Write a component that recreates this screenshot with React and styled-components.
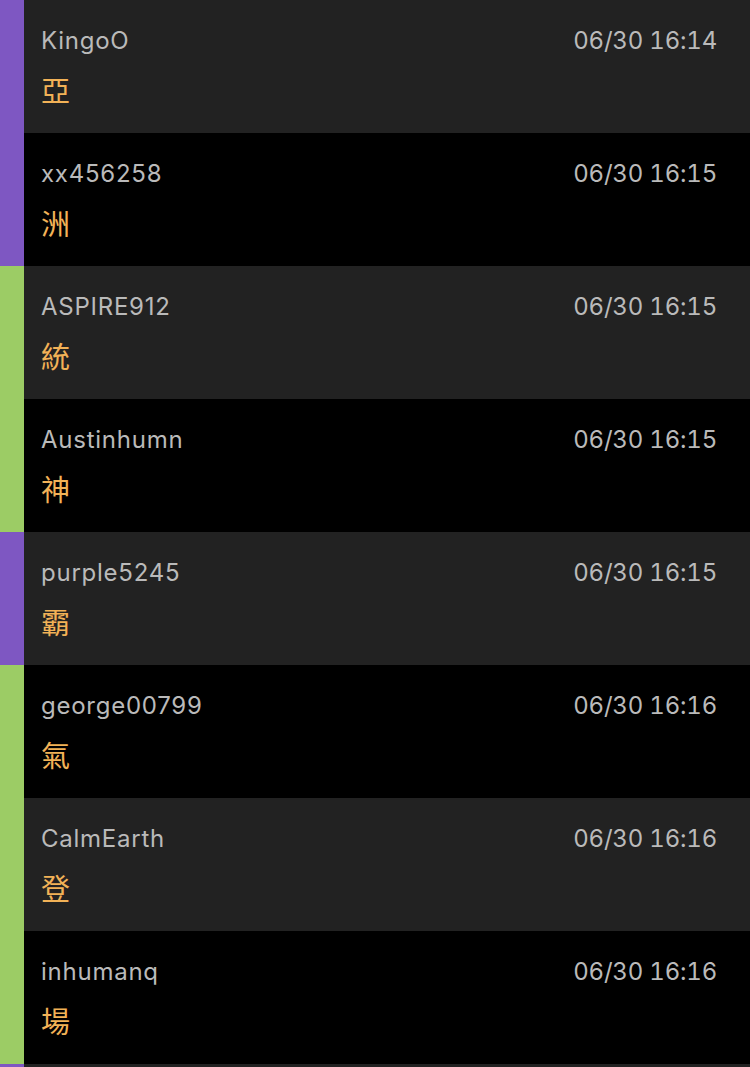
import React from "react";
import styled, { createGlobalStyle } from "styled-components";

const Global = createGlobalStyle`
  html, body { margin: 0; padding: 0; background: #000; }
  body { font-family: Inter, "Noto Sans CJK TC", sans-serif; overflow: hidden; }
`;

const List = styled.div`
  display: flex;
  flex-direction: column;
  width: 750px;
`;

const Row = styled.div`
  display: flex;
  height: 133px;
  background: ${(p) => (p.$odd ? "#000000" : "#222222")};
`;

const Bar = styled.div`
  width: 24px;
  flex-shrink: 0;
  background: ${(p) => (p.$tone === "purple" ? "#7e57c2" : "#9ccc65")};
`;

const Body = styled.div`
  flex: 1;
  display: flex;
  flex-direction: column;
  padding: 26px 33px 0 17px;
`;

const Head = styled.div`
  display: flex;
  justify-content: space-between;
  align-items: baseline;
  color: #bababa;
  font-size: 24px;
  line-height: 30px;
`;

const Name = styled.span`
  letter-spacing: 0.75px;
`;
const Time = styled.span`
  font-variant-numeric: tabular-nums;
  letter-spacing: -0.2px;
`;

const Word = styled.div`
  margin-top: 16px;
  color: #f2b257;
  font-family: "Noto Sans CJK TC", sans-serif;
  font-size: 29px;
  line-height: 34px;
`;

const rows = [
  ["KingoO", "06/30 16:14", "亞", "purple"],
  ["xx456258", "06/30 16:15", "洲", "purple"],
  ["ASPIRE912", "06/30 16:15", "統", "green"],
  ["Austinhumn", "06/30 16:15", "神", "green"],
  ["purple5245", "06/30 16:15", "霸", "purple"],
  ["george00799", "06/30 16:16", "氣", "green"],
  ["CalmEarth", "06/30 16:16", "登", "green"],
  ["inhumanq", "06/30 16:16", "場", "green"],
  ["", "", "", "purple"],
];

export default function App() {
  return (
    <>
      <Global />
      <List>
        {rows.map(([name, time, word, tone], i) => (
          <Row key={i} $odd={i % 2 === 1}>
            <Bar $tone={tone} />
            <Body>
              <Head>
                <Name>{name}</Name>
                <Time>{time}</Time>
              </Head>
              <Word>{word}</Word>
            </Body>
          </Row>
        ))}
      </List>
    </>
  );
}
